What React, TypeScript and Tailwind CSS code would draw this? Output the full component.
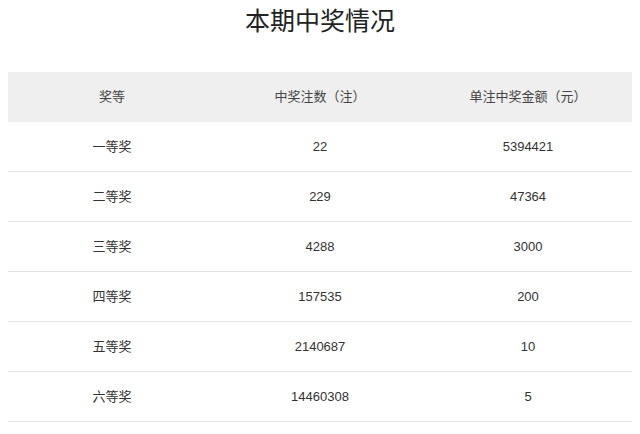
const rows = [
  { level: "一等奖", count: "22", amount: "5394421" },
  { level: "二等奖", count: "229", amount: "47364" },
  { level: "三等奖", count: "4288", amount: "3000" },
  { level: "四等奖", count: "157535", amount: "200" },
  { level: "五等奖", count: "2140687", amount: "10" },
  { level: "六等奖", count: "14460308", amount: "5" },
];

export default function App() {
  return (
    <div
      className="h-[434px] w-[640px] overflow-hidden bg-white text-[#333]"
      style={{ fontFamily: '"Liberation Sans", "Noto Sans CJK SC", sans-serif' }}
    >
      {/* Title */}
      <h1 className="pt-[5px] text-center text-[25px] leading-[33px] font-normal text-[#222]">
        本期中奖情况
      </h1>

      {/* Prize table */}
      <div className="mx-2 mt-[34px]">
        <div className="grid h-[50px] grid-cols-3 items-center bg-[#efefef] text-center text-[13px] text-[#444]">
          <div>奖等</div>
          <div>中奖注数（注）</div>
          <div>单注中奖金额（元）</div>
        </div>
        {rows.map((row) => (
          <div
            key={row.level}
            className="grid h-[50px] grid-cols-3 items-center border-b border-[#e4e4e4] text-center text-[13px]"
          >
            <div>{row.level}</div>
            <div>{row.count}</div>
            <div>{row.amount}</div>
          </div>
        ))}
      </div>
    </div>
  );
}
